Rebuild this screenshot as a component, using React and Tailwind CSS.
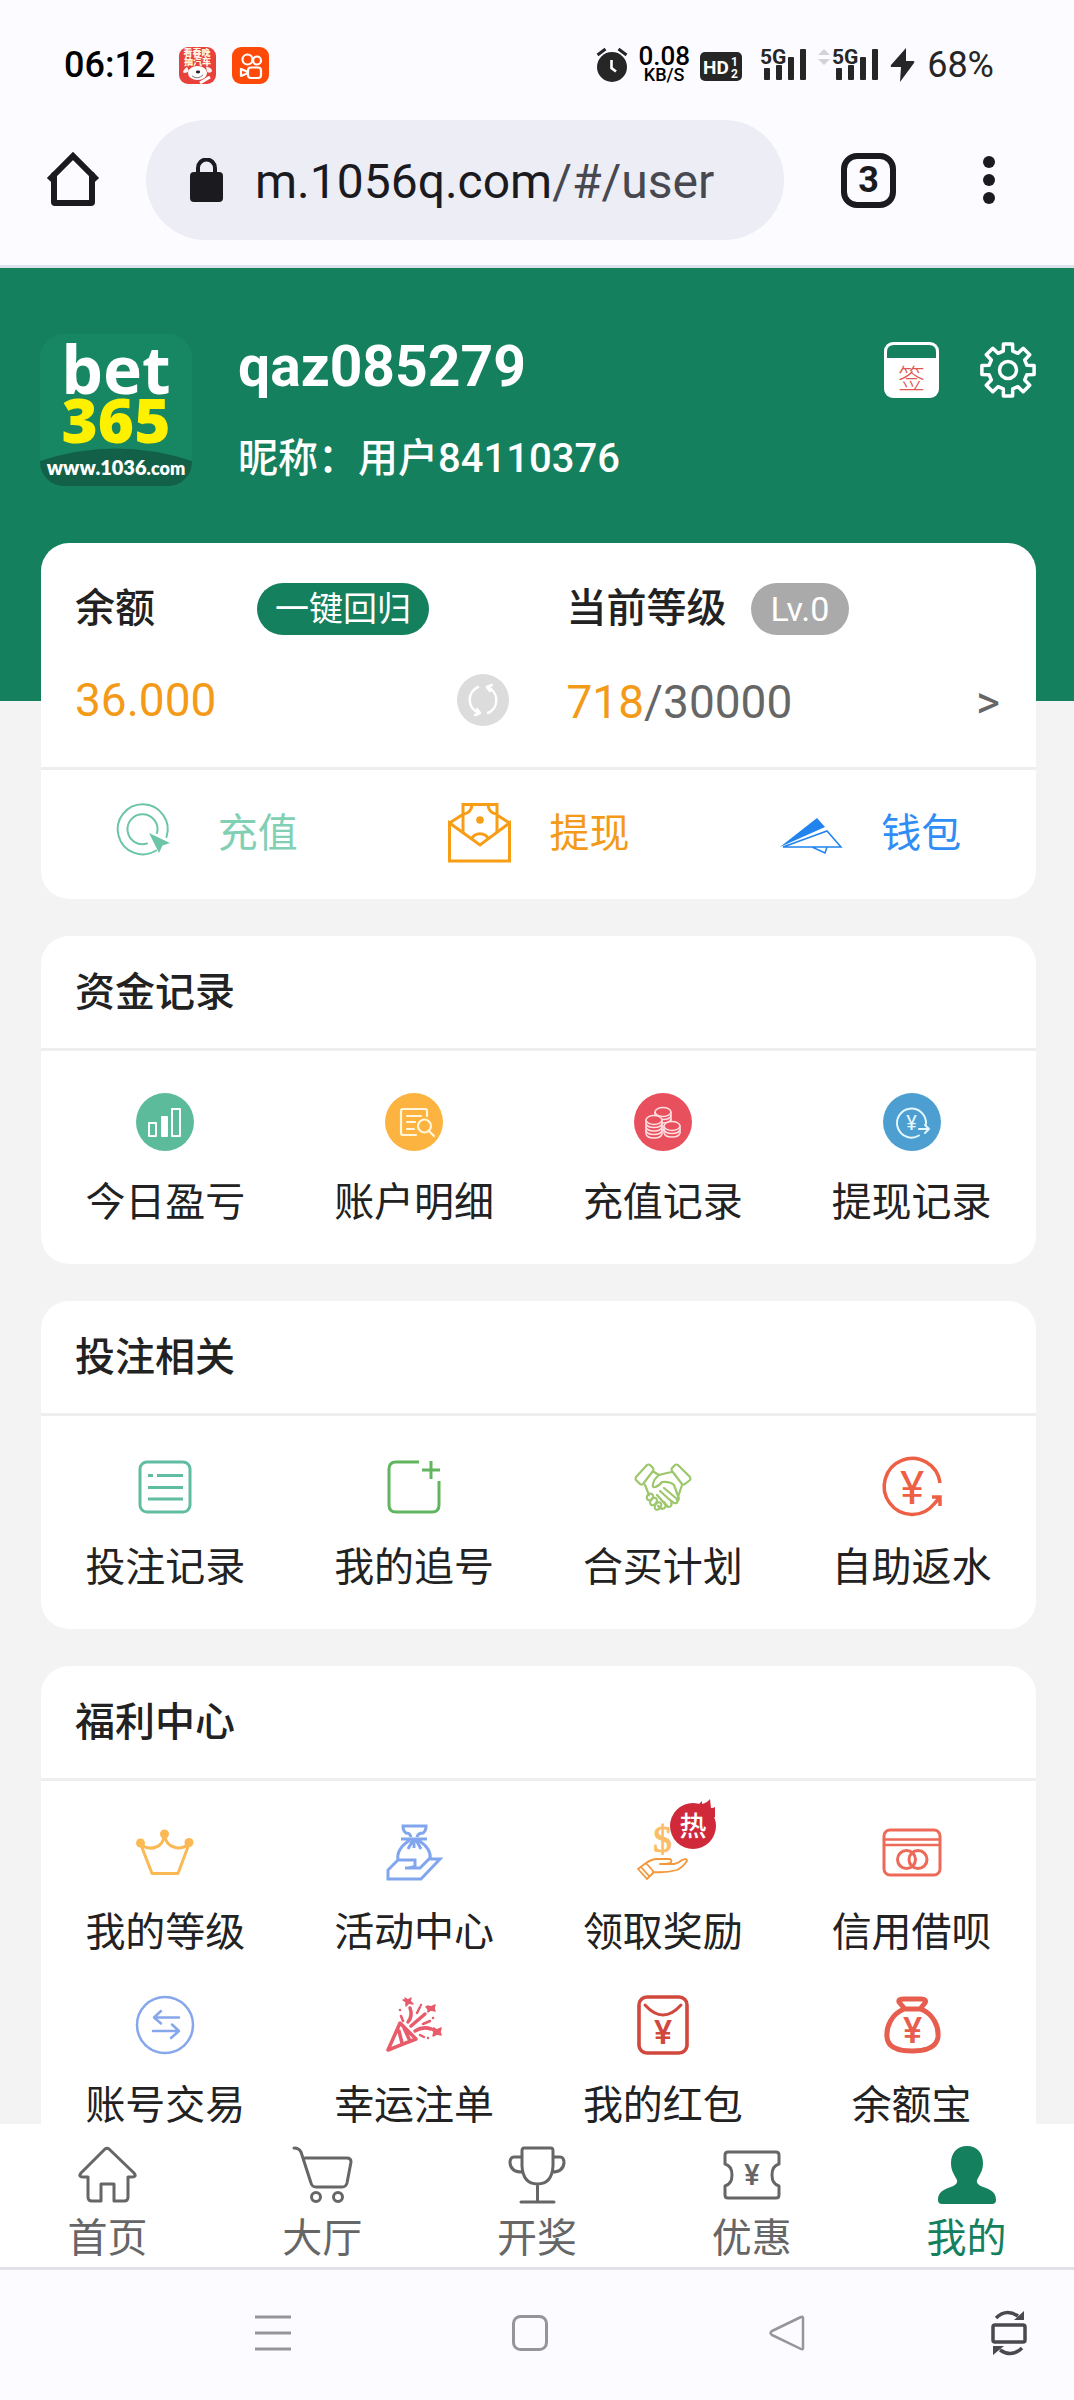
const ROBOTO = "Roboto, 'Noto Sans CJK SC', sans-serif";

function Icon({ size = 58, className = "", children, ...rest }) {
  return (
    <svg
      width={size}
      height={size}
      viewBox={`0 0 ${size} ${size}`}
      fill="none"
      stroke="currentColor"
      strokeWidth="3"
      strokeLinecap="round"
      strokeLinejoin="round"
      aria-hidden="true"
      className={`block shrink-0 overflow-visible ${className}`}
      {...rest}
    >
      {children}
    </svg>
  );
}

function Yen({ x, y, size, weight = 400, fill = "currentColor" }) {
  return (
    <text x={x} y={y} fontSize={size} fontWeight={weight} fontFamily={ROBOTO} textAnchor="middle" fill={fill} stroke="none">
      ¥
    </text>
  );
}

/* ---------- status bar ---------- */

function Signal() {
  return (
    <svg width="50" height="36" viewBox="0 0 50 36" aria-hidden="true" className="block overflow-visible">
      <text x="0" y="17" fontSize="21" fontWeight="700" fontFamily={ROBOTO} fill="#262626">5G</text>
      <g fill="#262626">
        <rect x="4" y="21" width="6" height="12" rx="1" />
        <rect x="16" y="18" width="6" height="15" rx="1" />
        <rect x="28" y="10" width="6" height="23" rx="1" />
        <rect x="40" y="2" width="6" height="31" rx="1" />
      </g>
    </svg>
  );
}

function StatusBar() {
  return (
    <div className="flex h-[120px] items-start justify-between pt-[46px] pr-20 pl-16 text-[#262626]">
      <div className="flex h-[38px] items-center">
        <time className="text-4xl leading-none font-medium text-black">06:12</time>
        <svg width="37" height="37" viewBox="0 0 37 37" aria-hidden="true" className="ml-6 block">
          <rect width="37" height="37" rx="9" fill="#e8413c" />
          <text x="18" y="9" fontSize="9" fontWeight="900" fontFamily={ROBOTO} textAnchor="middle" fill="#fff3e2">看春晚</text>
          <text x="18.500" y="18" fontSize="9" fontWeight="900" fontFamily={ROBOTO} textAnchor="middle" fill="#fff3e2">抽汽车</text>
          <path d="M8 20c-3 2-5 5-3 6 2 0 4-1 5-2M27 20c4 0 6 2 6 4-1 2-3 2-5 1" fill="#f4f4f4" />
          <ellipse cx="18.500" cy="26" rx="9.500" ry="7" fill="#fff" />
          <ellipse cx="19" cy="25" rx="2.200" ry="1.400" fill="#222" />
          <path d="M13 29q6 4 11-1" stroke="#777" strokeWidth="1" fill="none" />
          <path d="M21 36l10-6" stroke="#fff" strokeWidth="3" />
        </svg>
        <svg width="37" height="37" viewBox="0 0 37 37" aria-hidden="true" className="ml-4 block">
          <rect width="37" height="37" rx="9" fill="#fe4a08" />
          <g stroke="#fff" strokeWidth="2.200" fill="none" strokeLinejoin="round">
            <circle cx="15.500" cy="12.500" r="5" />
            <circle cx="25" cy="13.500" r="4" />
            <rect x="16" y="20.500" width="13" height="10.500" rx="3" />
            <path d="M9 22v7l6-2.500v-2z" />
          </g>
        </svg>
      </div>
      <div className="flex h-[38px] items-center">
        <svg width="32" height="36" viewBox="0 0 32 36" aria-hidden="true" className="block">
          <circle cx="16" cy="20" r="15" fill="#262626" />
          <path d="M1.500 8l8-6M30.500 8l-8-6" stroke="#262626" strokeWidth="3" />
          <path d="M15.500 13v8l4.500 3.500" stroke="#fff" strokeWidth="2.600" fill="none" />
        </svg>
        <div className="ml-2 flex w-14 flex-col items-center font-medium text-black">
          <span className="text-[26px] leading-5">0.08</span>
          <span className="text-lg leading-[18px]">KB/S</span>
        </div>
        <svg width="42" height="30" viewBox="0 0 42 30" aria-hidden="true" className="mt-1 ml-2 block">
          <rect width="42" height="29" rx="5" fill="#262626" />
          <g fill="#fff" fontFamily={ROBOTO} fontWeight="700">
            <text x="3" y="22" fontSize="19">HD</text>
            <text x="31" y="14" fontSize="12">1</text>
            <text x="31" y="26" fontSize="12">2</text>
          </g>
        </svg>
        <div className="ml-[18px]"><Signal /></div>
        <svg width="12" height="16" viewBox="0 0 12 16" aria-hidden="true" className="mb-4 ml-2 block">
          <path d="M6 0l6 6H0zM6 16l6-6H0z" fill="#d3d2d6" />
        </svg>
        <div className="ml-0.5"><Signal /></div>
        <svg width="25" height="34" viewBox="0 0 25 34" aria-hidden="true" className="ml-2 block">
          <path d="M16 0L1 17q-1 2 1 2h9L10 34 24 15q1-2-1-2h-7z" fill="#262626" />
        </svg>
        <span className="ml-3 text-4xl leading-none">68%</span>
      </div>
    </div>
  );
}

/* ---------- browser toolbar ---------- */

function BrowserBar() {
  return (
    <div className="flex items-center border-b-3 border-[#dde3ec] pr-[79px] pb-[25px] pl-[45px] text-[#1b1b1f]">
      <button type="button" aria-label="Home">
        <Icon size={56} strokeWidth="6">
          <path d="M9 23v27q0 1 1 1h36q1 0 1-1V23" />
          <path d="M4 28L28 4l24 24" strokeLinecap="butt" strokeLinejoin="miter" />
        </Icon>
      </button>
      <button type="button" className="mr-[57px] ml-[45px] flex h-[120px] flex-1 items-center rounded-full bg-[#ecedf5] pl-11">
        <svg width="33" height="44" viewBox="0 0 33 44" aria-hidden="true" className="block shrink-0">
          <rect y="14" width="33" height="30" rx="4" fill="#1b1b1f" />
          <path d="M8 16V10a8.500 8.500 0 0 1 17 0v6" fill="none" stroke="#1b1b1f" strokeWidth="4" />
        </svg>
        <span className="ml-8 pt-1 text-5xl leading-none whitespace-nowrap">
          m.1056q.com<span className="text-[#474850]">/#/user</span>
        </span>
      </button>
      <button type="button" className="flex size-[55px] items-center justify-center rounded-2xl border-6 border-[#1b1b1f] text-4xl leading-none font-bold">
        3
      </button>
      <button type="button" aria-label="Menu" className="ml-[87px] flex flex-col gap-1.5">
        <span className="size-3 rounded-full bg-[#1b1b1f]" />
        <span className="size-3 rounded-full bg-[#1b1b1f]" />
        <span className="size-3 rounded-full bg-[#1b1b1f]" />
      </button>
    </div>
  );
}

/* ---------- profile header ---------- */

function Logo() {
  return (
    <svg width="152" height="152" viewBox="0 0 152 152" role="img" aria-label="bet365" className="block shrink-0 overflow-visible">
      <clipPath id="logo-clip"><rect width="152" height="152" rx="24" /></clipPath>
      <rect width="152" height="152" rx="24" fill="#178663" />
      <path d="M0 127Q76 102 152 127V152H0z" fill="#136048" clipPath="url(#logo-clip)" />
      <g textAnchor="middle">
        <text x="76" y="60" fontSize="66" fontWeight="700" fontFamily="'Open Sans', sans-serif" fill="#fff">bet</text>
        <text x="76" y="109" fontSize="62" fontWeight="800" fontFamily="'Open Sans', sans-serif" fill="#fdf100">365</text>
        <text x="76" y="141" fontSize="20" fontWeight="800" fontFamily="Lato, sans-serif" fill="#fff">
          www.1036<tspan fontSize="18">.com</tspan>
        </text>
      </g>
    </svg>
  );
}

const GEAR = (() => {
  const pt = (r, deg) => {
    const a = (deg * Math.PI) / 180;
    return `${(28 + r * Math.cos(a)).toFixed(1)} ${(28 + r * Math.sin(a)).toFixed(1)}`;
  };
  const pts = [];
  for (let i = 0; i < 8; i++) {
    const c = i * 45 - 90;
    pts.push(pt(19.5, c - 14), pt(26.5, c - 10), pt(26.5, c + 10), pt(19.5, c + 14));
  }
  return `M${pts.join("L")}Z`;
})();

function Profile() {
  return (
    <header className="flex bg-[#15805d] px-[38px] pt-[66px] pb-[215px] text-white">
      <div className="ml-0.5"><Logo /></div>
      <div className="ml-[46px] flex-1">
        <h1 className="text-[57px] leading-[66px] font-bold">qaz085279</h1>
        <p className="mt-8 text-[40px] leading-[54px] font-medium">昵称：用户84110376</p>
      </div>
      <div className="flex items-start gap-10 pt-2">
        <button type="button" aria-label="签到">
          <svg width="56" height="56" viewBox="0 0 56 56" className="block">
            <rect width="55" height="56" rx="9" fill="#fff" />
            <path d="M3 16V10q0-7 7-7h35q7 0 7 7v6z" fill="#15805d" />
            <text x="27.500" y="47" fontSize="27" fontWeight="300" fontFamily={ROBOTO} textAnchor="middle" fill="#dd5a50">签</text>
          </svg>
        </button>
        <button type="button" aria-label="设置">
          <Icon size={56} strokeWidth="3.500">
            <path d={GEAR} />
            <circle cx="28" cy="28" r="8.500" />
          </Icon>
        </button>
      </div>
    </header>
  );
}

/* ---------- balance card ---------- */

const actions = [
  {
    label: "充值",
    tone: "text-[#82d0b4]",
    icon: (
      <Icon size={64} strokeWidth="2" className="text-[#6cc5a6]">
        <path d="M50.500 35A25 25 0 1 0 40 48.500" />
        <path d="M41 31A15 15 0 1 0 31 41.500" />
        <path d="M33 31l21 10-7.500 2.500L43 51z" fill="currentColor" stroke="none" />
      </Icon>
    ),
  },
  {
    label: "提现",
    tone: "text-[#f39b18]",
    icon: (
      <Icon size={64} strokeLinejoin="miter" strokeLinecap="butt" className="text-[#f79d16]">
        <path d="M2.500 21v38h60V21L33 43z" />
        <path d="M2.500 21L15 13M62.500 21L50 13M16 31V2.500h34V31" />
        <path d="M24.500 37a9.500 9.500 0 0 1 17 0M17 12q7-1 8-9M49 12q-7-1-8-9" />
        <circle cx="33" cy="18" r="3.800" fill="currentColor" stroke="none" />
      </Icon>
    ),
  },
  {
    label: "钱包",
    tone: "text-[#2f8df5]",
    icon: (
      <Icon size={64} strokeWidth="1.500" strokeLinejoin="miter" className="text-[#2083ee]">
        <path d="M1 45l37-29 8 9z" fill="currentColor" stroke="none" />
        <path d="M4 45l44-16 14 16zM33 45l13 6 2-6" />
      </Icon>
    ),
  },
];

function BalanceCard() {
  return (
    <section className="-mt-[158px] rounded-[28px] bg-white">
      <div className="grid grid-cols-2 gap-x-[58px] pt-10 pr-9 pb-[41px] pl-[34px]">
        <div>
          <div className="flex h-[52px] items-center">
            <h2 className="text-[40px] leading-none font-medium">余额</h2>
            <button type="button" className="ml-[102px] h-[52px] rounded-full bg-[#15805d] px-[18px] text-[34px] leading-none text-white">
              一键回归
            </button>
          </div>
          <div className="mt-[39px] flex h-[52px] items-center justify-between">
            <span className="text-[46px] leading-none text-[#f39b18]">36.000</span>
            <button type="button" aria-label="刷新" className="flex size-[52px] items-center justify-center rounded-full bg-[#dcdcdc] text-white">
              <Icon size={32} strokeWidth="2.500">
                <path d="M11 3A14 14 0 0 0 12 29M21 29A14 14 0 0 0 20 3" />
                <path d="M8 31l5-2-3-4M25 1l-5 2 3 4" />
              </Icon>
            </button>
          </div>
        </div>
        <div>
          <div className="flex h-[52px] items-center">
            <h2 className="text-[40px] leading-none font-medium">当前等级</h2>
            <span className="ml-6 flex h-[52px] items-center rounded-full bg-[#aaa] px-5 text-[34px] leading-none text-white">Lv.0</span>
          </div>
          <a href="#level" className="mt-[39px] flex h-[52px] items-center justify-between pt-1 text-[#666]">
            <span className="text-[46px] leading-none"><span className="text-[#f39b18]">718</span>/30000</span>
            <span className="text-[46px] leading-none">&gt;</span>
          </a>
        </div>
      </div>
      <div className="grid h-[132px] grid-cols-3 border-t-3 border-[#eee] pb-0.5">
        {actions.map((a) => (
          <a key={a.label} href="#pay" className={`flex items-center justify-center gap-[38px] text-[40px] leading-[60px] ${a.tone}`}>
            {a.icon}
            <span>{a.label}</span>
          </a>
        ))}
      </div>
    </section>
  );
}

/* ---------- menu sections ---------- */

function Coin({ x, y, n }) {
  const bottom = y + n * 3.5;
  return (
    <g strokeWidth="1.500">
      <path d={`M${x - 8} ${y}V${bottom}q1 4 8 4t8-4V${y}z`} fill="#e9505e" stroke="none" />
      {Array.from({ length: n }, (_, i) => (
        <path key={i} d={`M${x - 8} ${y + i * 3.5}v3.500q1 4 8 4t8-4v-3.500`} />
      ))}
      <ellipse cx={x} cy={y} rx="8" ry="4.500" fill="#e9505e" />
    </g>
  );
}

const sections = [
  {
    title: "资金记录",
    items: [
      {
        label: "今日盈亏",
        icon: (
          <Icon strokeWidth="2" className="text-white">
            <circle cx="29" cy="29" r="29" fill="#5cbb9a" stroke="none" />
            <rect x="13" y="30" width="7" height="13" />
            <rect x="25" y="23" width="7" height="21" rx="1" fill="currentColor" stroke="none" />
            <rect x="36" y="16" width="8" height="27" />
          </Icon>
        ),
      },
      {
        label: "账户明细",
        icon: (
          <Icon strokeWidth="2.200" className="text-[#fff6dc]">
            <circle cx="29" cy="29" r="29" fill="#fdb33f" stroke="none" />
            <path d="M42 23v-5q0-2-2-2H18q-2 0-2 2v22q0 2 2 2h13M22 23h14M22 29h8M22 36h7" />
            <circle cx="39.500" cy="33" r="6.500" />
            <path d="M44 38l5 5" />
          </Icon>
        ),
      },
      {
        label: "充值记录",
        icon: (
          <Icon className="text-[#ffdfe1]">
            <circle cx="29" cy="29" r="29" fill="#e9505e" stroke="none" />
            <Coin x={29} y={19} n={4} />
            <Coin x={20} y={27} n={4} />
            <Coin x={38} y={33} n={2} />
          </Icon>
        ),
      },
      {
        label: "提现记录",
        icon: (
          <Icon strokeWidth="2" className="text-[#e3f7ff]">
            <circle cx="29" cy="29" r="29" fill="#4c9fd0" stroke="none" />
            <path d="M43 31A14.500 14.500 0 1 0 36 42.500M36 36h10M42 32l4 4-4 4" />
            <Yen x={28.5} y={37} size={20} />
          </Icon>
        ),
      },
    ],
  },
  {
    title: "投注相关",
    items: [
      {
        label: "投注记录",
        icon: (
          <Icon className="text-[#61bda2]" strokeLinecap="butt">
            <rect x="4" y="4" width="50" height="50" rx="7" />
            <path d="M12 17.500h5M21 17.500h26M12 29.500h35M12 41h35" />
          </Icon>
        ),
      },
      {
        label: "我的追号",
        icon: (
          <Icon className="text-[#62b55f]" strokeLinecap="butt">
            <path d="M34 4H11q-7 0-7 7v36q0 7 7 7h36q7 0 7-7V23M46 3v18M37 12h18" />
          </Icon>
        ),
      },
      {
        label: "合买计划",
        icon: (
          <Icon strokeWidth="2.200" className="text-[#9cc76b]">
            <path d="M16 7l3 3q1 1 0 3L9 26q-1 1-3 0l-4-4q-1-1 0-3L13 7q2-1 3 0zM41 7l-3 3q-1 1 0 3l10 13q1 1 3 0l5-4q1-1 0-3L44 7q-2-1-3 0z" />
            <path d="M20 14l5 3q4-1 8-2l5-1M11 27l4 10M48 27l-4 12" />
            <path d="M25 17q-5 4-6 9-1 4 2 3 4-1 7-5 8-1 12 3M30 30l13 11q2 5-3 4l-5-4M26 33l11 10q2 6-3 6l-4-5M23 37l8 9q2 4-3 5l-4-3M40 27l4 11q2 4-1 5" />
            <ellipse cx="16" cy="39" rx="3" ry="3.500" transform="rotate(35 16 39)" />
            <ellipse cx="19.500" cy="43.500" rx="3" ry="4" transform="rotate(35 19.500 43.500)" />
            <ellipse cx="24" cy="48" rx="2.800" ry="4" transform="rotate(35 24 48)" />
          </Icon>
        ),
      },
      {
        label: "自助返水",
        icon: (
          <Icon className="text-[#ee6045]" strokeWidth="3.500">
            <path d="M57 25A28 28 0 1 0 51 46l6-7M49 39h8v9" strokeLinecap="butt" strokeLinejoin="miter" />
            <Yen x={29} y={46} size={46} />
          </Icon>
        ),
      },
    ],
  },
  {
    title: "福利中心",
    items: [
      {
        label: "我的等级",
        icon: (
          <Icon className="text-[#fbb955]">
            <path d="M5 22l11 28.500h26L53 21q-8 6-15 3-8-2-9.500-12Q27 22 20 24q-7 3-15-2z" />
            <g fill="currentColor" stroke="none">
              <circle cx="4.500" cy="20" r="4.500" />
              <circle cx="28.500" cy="11" r="4.500" />
              <circle cx="53" cy="19.500" r="4.500" />
            </g>
          </Icon>
        ),
      },
      {
        label: "活动中心",
        icon: (
          <Icon className="text-[#82a6ee]" strokeLinejoin="miter" strokeLinecap="butt">
            <path d="M26 14q-1-4-5-4-3-2-3-7h23q0 5-3 7-5 0-6 4M16 16h26M25 17Q11 26 13 37M33 17q14 9 12 19M28 17l-5 9M31 17l5 9M29 17v8" />
            <path d="M3 56V47l10-10h17v6q-3 2-10 2h15l9-9h11L36 56z" />
          </Icon>
        ),
      },
      {
        label: "领取奖励",
        hot: true,
        icon: (
          <Icon strokeWidth="1.800" className="text-[#f2983a]">
            <text x="28.500" y="29" fontSize="37" fontFamily="'Liberation Serif', serif" textAnchor="middle" fill="#fbbd68" stroke="#fbbd68" strokeWidth="1">$</text>
            <path d="M4 46l8-6 8 9-7 7zM7 44l8 9M12 40q6-4 11-4h13q3 2 0 4-4 1-10 1h14q5-1 8-4 5-2 5 1-4 6-10 9-11 3-24 2" />
          </Icon>
        ),
      },
      {
        label: "信用借呗",
        icon: (
          <Icon className="text-[#ee6a58]">
            <rect x="1" y="7" width="56" height="45" rx="6" />
            <path d="M1 16.500h56M1 22h56" strokeWidth="2.500" />
            <circle cx="23.500" cy="36.500" r="9" />
            <circle cx="35" cy="36.500" r="9" />
          </Icon>
        ),
      },
      {
        label: "账号交易",
        icon: (
          <Icon strokeWidth="2.500" className="text-[#86a7ec]">
            <circle cx="29" cy="29" r="28" />
            <path d="M43 21.500H18l7-6.500M18 21.500l7 6M17 35h26l-7-6.500M43 35l-8 7" />
          </Icon>
        ),
      },
      {
        label: "幸运注单",
        icon: (
          <Icon strokeWidth="3.500" className="text-[#e85b6a]">
            <path d="M15 27L3 54l28-11zM14 35l3 12M19 32l6 13" />
            <path d="M23 26q5-6 2-14M26 30L40 18M30 35q8-5 16-2" />
            <path d="M16 20l2 5M32 17l3-6M38 28l7-3M35 39l4 2" strokeWidth="2.500" />
            <path d="M20 2l3 2 3-2-1 3 3 3-4-1-3 3v-4l-3-2h3zM43 10l3 1 4-2-1 3 1 3-4-1-3 2v-3l-2-2zM49 32l3 2 4-2-1 4 1 3-4-1-4 2 1-4-2-3z" strokeWidth="1.500" fill="currentColor" />
            <path d="M15 14v0M36 9v0M48 22v0M43 42v0" strokeWidth="2.500" />
          </Icon>
        ),
      },
      {
        label: "我的红包",
        icon: (
          <Icon className="text-[#d1483d]">
            <rect x="5" y="1" width="48" height="56" rx="8" strokeWidth="3.600" />
            <path d="M11 9q18 20 36 0" />
            <Yen x={29} y={48} size={34} weight={500} />
          </Icon>
        ),
      },
      {
        label: "余额宝",
        icon: (
          <Icon className="text-[#e75e4e]" strokeWidth="5">
            <path d="M21 12l-5-6q-1-3 5-3h17q6 0 4 4l-5 6M21 13h17C50 18 56 30 55 41q-2 14-26 14T4 41C3 30 9 18 21 13z" />
            <Yen x={29.5} y={47} size={36} weight={500} />
          </Icon>
        ),
      },
    ],
  },
];

function HotBadge() {
  return (
    <svg width="48" height="50" viewBox="0 0 48 50" aria-hidden="true" className="absolute -top-6 left-9 block">
      <path d="M29 5l3-3v3q5-1 8-5l1 9q3 0 4-1v10H30z" fill="#d0293a" />
      <circle cx="23" cy="27" r="23" fill="#d0293a" />
      <text x="23" y="37" fontSize="27" fontWeight="500" fontFamily={ROBOTO} textAnchor="middle" fill="#fff">热</text>
    </svg>
  );
}

function MenuSection({ title, items }) {
  return (
    <section className="mt-[37px] rounded-[28px] bg-white">
      <h2 className="border-b-3 border-[#eee] pt-[27px] pr-9 pb-[25px] pl-[34px] text-[40px] leading-[60px] font-medium">{title}</h2>
      <div className="grid grid-cols-4 gap-y-[43px] pt-[42px] pb-[41px]">
        {items.map((it) => (
          <a key={it.label} href="#menu" className="flex flex-col items-center gap-8">
            <span className="relative">
              {it.icon}
              {it.hot && <HotBadge />}
            </span>
            <span className="text-[40px] leading-10">{it.label}</span>
          </a>
        ))}
      </div>
    </section>
  );
}

/* ---------- bottom bars ---------- */

const tabs = [
  {
    label: "首页",
    icon: (
      <Icon>
        <path d="M27 3q2-1.500 4 0l25 24q3 4-2 4h-4v20q0 4-4 4H36V38H23v17h-9q-4 0-4-4V31H5q-5 0-2-4z" />
      </Icon>
    ),
  },
  {
    label: "大厅",
    icon: (
      <Icon>
        <path d="M1 2q5 0 7 4l10 31q1 4 5 4h26q4 0 5-4l4-21q0-4-4-4H12" />
        <circle cx="23" cy="51" r="4.500" />
        <circle cx="45" cy="51" r="4.500" />
      </Icon>
    ),
  },
  {
    label: "开奖",
    icon: (
      <Icon>
        <path d="M16 2h27q2 0 2 3v15q-1 18-15.500 18T14 20V5q0-3 2-3zM14 11H6q-4 0-4 6 1 9 12 9M45 11h7q4 0 4 6-1 9-12 9M29.500 38v18M13 56h33" />
      </Icon>
    ),
  },
  {
    label: "优惠",
    icon: (
      <Icon>
        <path d="M5 6h48q3 0 3 3v9q-7 2-7 11t7 11v9q0 3-3 3H5q-3 0-3-3v-9q7-2 7-11T2 18V9q0-3 3-3z" />
        <Yen x={29} y={39} size={29} weight={500} />
      </Icon>
    ),
  },
  {
    label: "我的",
    active: true,
    icon: (
      <Icon stroke="none" fill="currentColor">
        <path d="M29 0c10 0 16 7 16 17 0 8-3 11-6 17-1 4 3 6 9 8 8 3 10 7 10 12q0 4-4 4H4q-4 0-4-4c0-5 2-9 10-12 6-2 10-4 9-8-3-6-6-9-6-17C13 7 19 0 29 0z" />
      </Icon>
    ),
  },
];

function TabBar() {
  return (
    <nav className="grid shrink-0 grid-cols-5 border-b-3 border-[#e0e1e9] bg-white pt-[22px] pb-[5px] text-[#666]">
      {tabs.map((t) => (
        <a
          key={t.label}
          href="#tab"
          aria-current={t.active ? "page" : undefined}
          className={`flex flex-col items-center gap-3 text-[40px] leading-[46px] ${t.active ? "text-[#15805d]" : ""}`}
        >
          {t.icon}
          <span>{t.label}</span>
        </a>
      ))}
    </nav>
  );
}

function SystemNav() {
  return (
    <div className="flex h-[130px] shrink-0 items-center bg-[#fcfbff] pb-1 pl-36 text-[#96959a]">
      <button type="button" aria-label="Recents" className="flex flex-1 justify-center">
        <Icon size={36} strokeLinecap="butt"><path d="M0 2h36M0 18h36M0 34h36" /></Icon>
      </button>
      <button type="button" aria-label="Home screen" className="flex flex-1 justify-center">
        <Icon size={36}><rect x="1.500" y="1.500" width="33" height="33" rx="7" /></Icon>
      </button>
      <button type="button" aria-label="Back" className="flex flex-1 justify-center">
        <Icon size={36}><path d="M32 2q2-1 2 1v30q0 2-2 1L3 20q-3-2 0-4z" strokeWidth="2.500" /></Icon>
      </button>
      <button type="button" aria-label="Rotate" className="flex w-[158px] justify-center pl-7 text-[#4a494e]">
        <Icon size={46} strokeWidth="3.500">
          <rect x="7" y="15" width="32" height="17" rx="2" />
          <path d="M10 8q10-10 22-2M36 38q-10 10-22 2" strokeLinecap="butt" />
          <path d="M38 1v9h-10zM7 45v-9h11z" fill="currentColor" stroke="none" />
        </Icon>
      </button>
    </div>
  );
}

export default function App() {
  return (
    <div className="flex h-screen flex-col bg-[#fcfbff] font-[Roboto,'Noto_Sans_CJK_SC',sans-serif] text-[#222]">
      <StatusBar />
      <BrowserBar />
      <main className="min-h-0 flex-1 overflow-y-auto bg-[#f3f3f3] [scrollbar-width:none]">
        <Profile />
        <div className="pr-[38px] pb-9 pl-[41px]">
          <BalanceCard />
          {sections.map((s) => (
            <MenuSection key={s.title} {...s} />
          ))}
        </div>
      </main>
      <TabBar />
      <SystemNav />
    </div>
  );
}
